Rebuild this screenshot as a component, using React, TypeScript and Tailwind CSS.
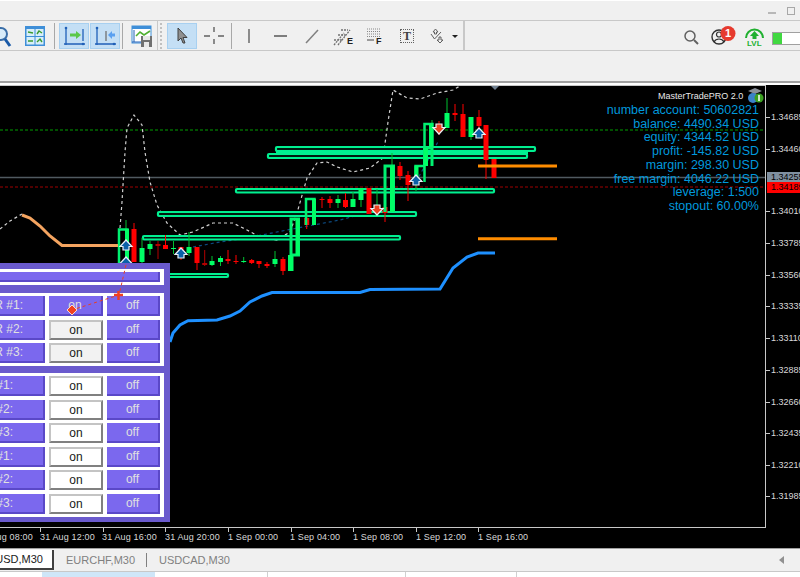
import React from "react";

type C = [number, number, number, number, number, string];
const R = "#ff0000";
const D = "#b30000";
const G = "#00ff66";
const candles: C[] = [
  [134, 223, 262, 229, 262, R], [142, 238, 264, 248, 262, G], [150, 241, 255, 244, 249, G],
  [158, 241, 259, 244, 246, D], [165.5, 235, 249, 245, 249, R], [173.5, 241, 254, 248, 249, G],
  [181, 247, 260, 247, 253, R], [189, 232, 256, 247, 253, G], [197, 247, 270, 247, 263, R],
  [204.7, 250, 266, 263, 265, D], [212, 256, 266, 261, 265, G], [220.5, 256, 266, 258, 262, G],
  [228, 250, 264, 259, 261, R], [236, 255, 264, 261, 262, R], [243.7, 257, 263, 261, 262, G],
  [251.7, 259, 264, 260, 263, R], [259, 261, 268, 261, 264, R], [267, 262, 268, 264, 266, R],
  [275, 251, 267, 259, 264, G], [283, 257, 275, 259, 271, R], [291, 255, 271, 255, 271, G],
  [306.7, 212, 229, 218, 225, R], [322, 197, 208, 199, 200, R], [330, 196, 208, 199, 203, R],
  [338, 195, 208, 199, 203, G], [345.5, 193, 208, 200, 207, R], [353, 192, 207, 199, 207, G],
  [361, 188, 207, 188, 200, G], [369, 188, 214, 188, 214, R], [377, 189, 215, 205, 205, G],
  [385, 195, 222, 207, 213, R], [400, 162, 180, 166, 176, R], [408, 171, 201, 175, 185, R],
  [439, 121, 135, 124, 129, R], [447, 98, 128, 113, 128, G], [455, 104, 121, 113, 115, R],
  [463, 104, 137, 114, 137, R], [471, 117, 140, 117, 137, G], [479, 110, 135, 117, 126, R],
  [486, 125, 179, 125, 160, R], [494, 159, 178, 159, 178, R],
];
const boxes = [
  [276, 147, 259, 4], [268, 154, 259, 4], [236, 189, 258, 3.5], [158, 212, 258, 4], [143, 236, 257, 3.5], [100, 274, 128, 3],
];
const shapes = [
  "M119 265V229.5H127.5V265", "M291 255V219H298.5V255H291", "M306 225V199H314.5V225", "M385 212V166H393.5V212",
  "M415.5 182V166H424.5V182", "M424.5 166V148H432V166", "M424.5 147V124H432.5V147",
];

const dashed =
  "M0 229L10 221L22 214M120 228L122 202L125 152L127 128L134 115L142 125L145 152L150 182L157 205L167 223L180 235L193 232L213 223L233 223L247 230L260 237L277 240L290 232L297 213L307 178L317 163L327 162L337 167L353 172L370 168L383 158L388 122L393 90L407 98L420 99L437 93L453 90L460 86";

const Arrow = ({ x, y, c, up }: { x: number; y: number; c: string; up?: boolean }) => (
  <g transform={`translate(${x} ${y})${up ? "" : " scale(1 -1)"}`}>
    <path d="M0 -6L6 0.5H3V4H-3V0.5H-6Z" fill={c} stroke="#e8f0f8" strokeWidth="1.2" />
  </g>
);

const Chart = () => (
  <svg width="800" height="463" viewBox="0 85 800 463" className="block">
    <rect x="-1" y="85.5" width="766.5" height="442" fill="none" stroke="#c8c8c8" />
    <path d="M0 130H765" stroke="#00a000" strokeDasharray="3 2" />
    <path d="M0 177.5H765" stroke="#505a60" strokeWidth="1.5" />
    <path d="M0 187H765" stroke="#a00000" strokeDasharray="3 2" />
    <path d={dashed} fill="none" stroke="#d0d0d0" strokeWidth="1.2" strokeDasharray="3 3" />
    <path d="M193 247L220 242L247 238L287 230L340 220L377 210M416 182L439 140" fill="none" stroke="#0c4a80" strokeWidth="1.2" strokeDasharray="3 3" />
    {boxes.map(([x, y, w, h], i) => (
      <rect key={i} x={x} y={y} width={w} height={h} fill="#001a10" stroke="#00f090" strokeWidth="2.2" rx="1" />
    ))}
    <rect x="276" y="151" width="252" height="3" fill="#00f090" />
    {candles.map(([x, t, b, bt, bb, c], i) => (
      <g key={i}>
        <path d={`M${x} ${t}V${b}`} stroke={c === G ? "#00c030" : c} strokeWidth="1" />
        <rect x={x - 2.5} y={bt} width="5" height={Math.max(bb - bt, 1)} fill={c} />
      </g>
    ))}
    <path d="M126 220V265M392 153V212M424 147V170M432 120V158M416 165V191" stroke="#00c030" strokeWidth="1" />
    {shapes.map((d, i) => (
      <path key={i} d={d} fill="none" stroke="#00f070" strokeWidth={i % 2 === 0 ? 2.5 : 3} />
    ))}
    <path d="M127 229V265M297.5 219V255M314 199V225M392 166V212M431 124V147M290 255V271M426 148V166M416.5 166V182" stroke="#00ff66" strokeWidth="4" />
    <path d="M22 215L30 218L40 226L50 236L62 245.5L118 245.5" fill="none" stroke="#f4a460" strokeWidth="3" />
    <path d="M170 342L173 333L180 325L188 320.7L217 320L230 316L240 311L250 302L262 296L272 292.5L360 292.5L370 289.5L440 289L453 268L467 257L478 253L495 253" fill="none" stroke="#1e90ff" strokeWidth="3" />
    <path d="M478 166H557M478 238.7H557" stroke="#ff8c00" strokeWidth="3" />
    <path d="M491 86H499L495 90Z" fill="#708090" />
    <Arrow x={126} y={246} c="#0a60a8" up />
    <Arrow x={126} y={263} c="#0a60a8" up />
    <Arrow x={181} y={254} c="#0a60a8" up />
    <Arrow x={416} y={181} c="#0a60a8" up />
    <Arrow x={479} y={134} c="#0a60a8" up />
    <Arrow x={439} y={128} c="#f04020" />
    <Arrow x={377} y={209} c="#f04020" />
    {[117, 149, 211, 243, 275, 306, 338, 370, 402, 433, 465, 496].map((y) => (
      <path key={y} d={`M765 ${y}.5H770`} stroke="#c8c8c8" />
    ))}
    {[40, 103, 165, 228, 291, 353, 416, 478].map((x) => (
      <path key={x} d={`M${x}.5 527V532`} stroke="#c8c8c8" />
    ))}
    <path d="M755 88L762 91L755 94L748 91Z" fill="#8a8f98" />
    <circle cx="753" cy="98" r="5" fill="#3b82c8" />
    <circle cx="759" cy="98" r="4.5" fill="#3aa020" />
    <path d="M759 95V101" stroke="#fff" strokeWidth="1.5" />
  </svg>
);

const priceLabels = [
  ["1.34685", 117], ["1.34460", 149], ["1.34010", 211], ["1.33785", 243], ["1.33560", 275], ["1.33335", 306],
  ["1.33110", 338], ["1.32885", 370], ["1.32660", 402], ["1.32435", 433], ["1.32210", 465], ["1.31985", 496],
] as const;
const timeLabels = [
  ["31 Aug 08:00", -22], ["31 Aug 12:00", 40], ["31 Aug 16:00", 102], ["31 Aug 20:00", 165], ["1 Sep 00:00", 228],
  ["1 Sep 04:00", 290], ["1 Sep 08:00", 353], ["1 Sep 12:00", 416], ["1 Sep 16:00", 478],
] as const;
const info = [
  "number account: 50602821", "balance: 4490.34 USD", "equity: 4344.52 USD", "profit: -145.82 USD",
  "margin: 298.30 USD", "free margin: 4046.22 USD", "leverage: 1:500", "stopout: 60.00%",
];

const Row = ({ label, pressed, active, far }: { label: string; pressed?: "on" | "off"; active?: boolean; far?: boolean }) => {
  const purple = "bg-[#7b68ee] border-r-2 border-b-2 border-[#5a48c8] text-[#e0e0e0]";
  const on = `${active ? "bg-[#f2f2f2]" : "bg-white"} border-2 border-[#c4c4c4] border-r-[#808080] border-b-[#808080] text-[#202020]`;
  return (
    <div className="flex gap-1 h-5 text-[12px]">
      <div className={`w-[45px] flex items-center justify-end whitespace-nowrap ${far ? "pr-[30px]" : "pr-[20px]"} ${purple}`}>{label}</div>
      <div className={`w-[54px] flex items-center justify-center ${pressed === "on" ? purple : on}`}>on</div>
      <div className={`w-[53px] flex items-center justify-center ${pressed === "off" ? on : purple}`}>off</div>
    </div>
  );
};

const Panel = () => (
  <div className="absolute left-0 top-[178px] w-[170px] h-[259px] bg-[#6a5acd] flex flex-col pt-[6px] pl-0 pr-[6px]">
    <div className="h-4 bg-white pr-1 py-[3px]">
      <div className="h-full bg-[#7b68ee] border-r-2 border-b-2 border-[#5a48c8]" />
    </div>
    <div className="mt-2 bg-white pr-1 py-[3px] flex flex-col gap-[3.5px]">
      <Row label="R #1:" pressed="on" active />
      <Row label="R #2:" active />
      <Row label="R #3:" active />
    </div>
    <div className="mt-[7px] bg-white pr-1 py-[3px] flex flex-col gap-[3.5px]">
      {["#1:", "#2:", "#3:", "#1:", "#2:", "#3:"].map((l, i) => (
        <Row key={i} label={l} far />
      ))}
    </div>
  </div>
);

const Btn = ({ active, className, children }: { active?: boolean; className?: string; children: React.ReactNode }) => (
  <div className={`w-[30px] h-[26px] flex items-center justify-center shrink-0 border ${active ? "bg-[#c4dff5] border-[#a8d0f0]" : "border-transparent"} ${className ?? ""}`}>
    <svg width="26" height="24" viewBox="0 0 26 24">{children}</svg>
  </div>
);

const Toolbar = () => (
  <div className="h-[31px] bg-[#f0f0f0] border-y border-[#c8c8c8] flex items-center relative">
    <div className="w-[465px] h-full flex items-center border-r-2 border-[#c8c8c8] overflow-hidden shrink-0">
      <svg width="14" height="26" viewBox="0 0 14 26" className="shrink-0">
        <circle cx="1" cy="11" r="6" fill="#d8ecfa" stroke="#3a6ea8" strokeWidth="2" />
        <path d="M5 16L10 23" stroke="#1a5aa8" strokeWidth="3" />
      </svg>
      <svg width="22" height="22" viewBox="0 0 22 22" className="ml-[10px] shrink-0">
        <rect x="1" y="1" width="20" height="20" fill="#3f8fd8" />
        <rect x="2.5" y="4" width="8" height="7" fill="#d8eef8" /><rect x="11.5" y="4" width="8" height="7" fill="#d8eef8" />
        <rect x="2.5" y="12" width="8" height="7.5" fill="#d8eef8" /><rect x="11.5" y="12" width="8" height="7.5" fill="#d8eef8" />
        <path d="M4 7L9 8M13 9L15 6L18 8M4 16H9M13 17L16 14L18 17" stroke="#3a9a30" strokeWidth="1.4" fill="none" />
      </svg>
      <div className="w-px h-[26px] bg-[#a8a8a8] ml-[8px] shrink-0" />
      <Btn active className="ml-[4px]">
        <path d="M5 3V21M3 20H24M22 5V17" stroke="#2060b8" strokeWidth="1.3" fill="none" />
        <circle cx="5" cy="4" r="1.3" fill="#2060b8" /><circle cx="22" cy="20" r="1.3" fill="#2060b8" />
        <path d="M9 9.5H15V7L20 11L15 15V12.5H9Z" fill="#5ac84a" />
      </Btn>
      <Btn active className="ml-[1px]">
        <path d="M5 3V21M3 20H24" stroke="#2060b8" strokeWidth="1.3" fill="none" />
        <path d="M14 7V17" stroke="#707070" strokeWidth="1.3" />
        <circle cx="5" cy="4" r="1.3" fill="#2060b8" /><circle cx="22" cy="20" r="1.3" fill="#2060b8" />
        <path d="M23 9.5H20V7L16 11L20 15V12.5H23Z" fill="#5aa0f0" />
      </Btn>
      <div className="w-px h-[26px] bg-[#a8a8a8] ml-[2px] shrink-0" />
      <svg width="24" height="24" viewBox="0 0 24 24" className="ml-[7px] shrink-0">
        <rect x="2" y="2" width="19" height="17" fill="#fff" stroke="#3f8fd8" />
        <rect x="2" y="2" width="19" height="3" fill="#3f8fd8" />
        <path d="M4 6V18M2 18H12" stroke="#2060b8" strokeWidth="1" />
        <path d="M6 12L10 8L14 11L20 7" stroke="#50b030" strokeWidth="1.6" fill="none" />
        <rect x="11" y="12" width="11" height="11" fill="#707070" /><rect x="13" y="12" width="7" height="4" fill="#e8e8e8" /><rect x="14" y="18" width="5" height="5" fill="#e8e8e8" />
      </svg>
      <div className="ml-[3px] w-px h-[29px] bg-[#c8c8c8] shrink-0" />
      <div className="w-[4px] h-[26px] ml-[2px] border-l-2 border-dotted border-[#c0c0c0] shrink-0" />
      <Btn active className="ml-[3px]">
        <path d="M9 4V17L12 14L14 19H16L14 13.5H18Z" fill="#909090" stroke="#404040" strokeWidth="1" />
      </Btn>
      <Btn className="ml-[2px]">
        <path d="M13 3V8M13 15V20M3 12H9M17 12H23" stroke="#606060" strokeWidth="1.4" />
      </Btn>
      <div className="w-px h-[26px] bg-[#a8a8a8] ml-[2px] shrink-0" />
      <svg width="165" height="24" viewBox="0 0 165 24" className="shrink-0">
        <path d="M17 5V19" stroke="#808080" strokeWidth="1.8" />
        <path d="M42 12H55" stroke="#606060" strokeWidth="1.6" />
        <path d="M74 19L86 6" stroke="#808080" strokeWidth="1.5" />
        <path d="M102 21L112 9M106 21L118 6M102 16H110M106 11H114M109 6H116" stroke="#707070" strokeWidth="1.3" strokeDasharray="2 1" />
        <path d="M135 5H149M135 7.5H149M135 10H149M135 12.5H149" stroke="#888" strokeWidth="1" strokeDasharray="1 1" />
        <path d="M135 16H142" stroke="#606060" strokeWidth="1.2" />
      </svg>
    </div>
    <span className="absolute left-[347px] top-[16px] text-[9px] font-bold text-[#202020] leading-none">E</span>
    <span className="absolute left-[376px] top-[16px] text-[9px] font-bold text-[#202020] leading-none">F</span>
    <span className="absolute left-[400px] top-[8px] w-[14px] h-[14px] border border-dotted border-[#606060] text-[12px] font-bold text-[#404040] flex items-center justify-center leading-none" style={{ fontFamily: '"Liberation Serif", serif' }}>T</span>
    <svg width="32" height="16" viewBox="0 0 32 16" className="absolute left-[428px] top-[7px]">
      <path d="M5 4L7.5 1L10 4H8.5V6H6.5V4ZM3 6L6.5 11L13 4M11 9V12H9L12 15L15 12H13V9Z" fill="none" stroke="#606060" strokeWidth="1" />
      <path d="M24 7H30L27 10Z" fill="#202020" />
    </svg>
    <svg width="22" height="20" viewBox="0 0 22 20" className="absolute left-[682px] top-[7px]">
      <circle cx="8" cy="8" r="5" fill="none" stroke="#606060" strokeWidth="1.5" />
      <path d="M12 12L16 16" stroke="#606060" strokeWidth="2" />
    </svg>
    <svg width="30" height="22" viewBox="0 0 30 22" className="absolute left-[708px] top-[5px]">
      <circle cx="11" cy="11" r="7" fill="none" stroke="#303030" strokeWidth="1.4" />
      <circle cx="11" cy="8.5" r="2.5" fill="none" stroke="#303030" strokeWidth="1.2" />
      <path d="M6 16C8 12 14 12 16 16" fill="none" stroke="#303030" strokeWidth="1.2" />
      <circle cx="20" cy="7.5" r="7.5" fill="#e63a2e" />
    </svg>
    <span className="absolute left-[725px] top-[6px] text-[11px] font-bold text-white leading-[13px]">1</span>
    <svg width="22" height="14" viewBox="0 0 22 14" className="absolute left-[743px] top-[6px]">
      <path d="M3 11A8.5 8.5 0 0 1 20 11" fill="none" stroke="#20b030" strokeWidth="2" />
      <path d="M11.5 4L16 9H13.5V12H9.5V9H7Z" fill="#20b030" />
    </svg>
    <span className="absolute left-[747px] top-[19px] text-[8px] font-bold text-[#20b030] leading-none">LVL</span>
    <div className="absolute left-[772px] top-[11px] w-[28px] h-[13px] bg-white border border-[#a0a0a0] border-r-0">
      <div className="w-[9px] h-full bg-[#40d840]" />
    </div>
  </div>
);

export default function App() {
  return (
    <div className="w-[800px] h-[577px] overflow-hidden bg-[#f0f0f0] relative" style={{ fontFamily: '"Liberation Sans", sans-serif' }}>
      <div className="h-[20px] border-t border-white relative">
        <div className="absolute left-[768px] top-[11px] w-2 h-[2px] bg-[#b8b8b8]" />
        <div className="absolute left-[787px] top-[6px] w-[8px] h-[8px] border border-[#a8a8a8]" />
      </div>
      <Toolbar />
      <div className="h-[30px]" />
      <div className="h-[4px] bg-[#a0a0a0] border-b-2 border-white" />
      <div className="relative h-[463px] bg-black overflow-hidden">
        <Chart />
        {priceLabels.map(([t, y]) => (
          <div key={t} className="absolute left-[771px] text-[9px] leading-3 text-[#d8d8d8]" style={{ top: y - 91 }}>{t}</div>
        ))}
        <div className="absolute left-[767px] top-[87px] w-[33px] h-[10px] bg-[#8090a0] text-[9px] leading-[10px] text-black pl-[4px] overflow-hidden">1.34255</div>
        <div className="absolute left-[767px] top-[97px] w-[33px] h-[11px] bg-[#ff0000] text-[9px] leading-[11px] text-black pl-[4px] overflow-hidden">1.34189</div>
        {timeLabels.map(([t, x]) => (
          <div key={t} className="absolute top-[446px] text-[9px] leading-3 whitespace-nowrap text-[#d8d8d8] tracking-[0.15px]" style={{ left: x }}>{t}</div>
        ))}
        <div className="absolute left-[658px] top-[5px] text-[9px] leading-3 text-[#e8e8e8] whitespace-nowrap">MasterTradePRO 2.0</div>
        <div className="absolute right-[41px] top-[19px] flex flex-col items-end text-[12.5px] leading-[13.7px] text-[#0098dc] whitespace-nowrap">
          {info.map((t) => <div key={t}>{t}</div>)}
        </div>
        <Panel />
        <svg width="70" height="70" viewBox="0 0 70 70" className="absolute left-[66px] top-[174px]">
          <path d="M60 6L53 36L6 51" fill="none" stroke="#e84020" strokeDasharray="3 3" />
          <path d="M6 46L11 51L6 56L1 51Z" fill="#f04020" stroke="#f8d8d0" strokeWidth="1" />
          <path d="M52.500 32V41M48 36H57" stroke="#f04020" strokeWidth="2.5" />
        </svg>
      </div>
      <div className="h-[1px] bg-[#a0a0a0]" />
      <div className="h-[22px] flex items-center text-[11px] text-[#808080] relative">
        <div className="w-[54px] h-[20px] bg-white border-r-2 border-b-2 border-[#404040] text-[#202020] flex items-center justify-end pr-[9px] overflow-hidden">USD,M30</div>
        <span className="ml-[12px]">EURCHF,M30</span>
        <div className="w-px h-[14px] bg-[#808080] ml-[11px]" />
        <span className="ml-[12px]">USDCAD,M30</span>
        <svg width="6" height="8" viewBox="0 0 6 8" className="absolute left-[779px] top-[7px]"><path d="M5 0V8L0 4Z" fill="#909090" /></svg>
      </div>
      <div className="h-[1px] bg-[#c8c8c8]" />
      <div className="h-[5px] bg-white relative">
        <div className="absolute left-[42px] top-0 w-[113px] h-full bg-[#cfe6f8]" />
        <div className="absolute left-[267px] top-0 w-px h-full bg-[#d0d0d0]" />
        <div className="absolute left-[405px] top-0 w-px h-full bg-[#d0d0d0]" />
        <div className="absolute left-[516px] top-0 w-px h-full bg-[#d0d0d0]" />
      </div>
    </div>
  );
}
